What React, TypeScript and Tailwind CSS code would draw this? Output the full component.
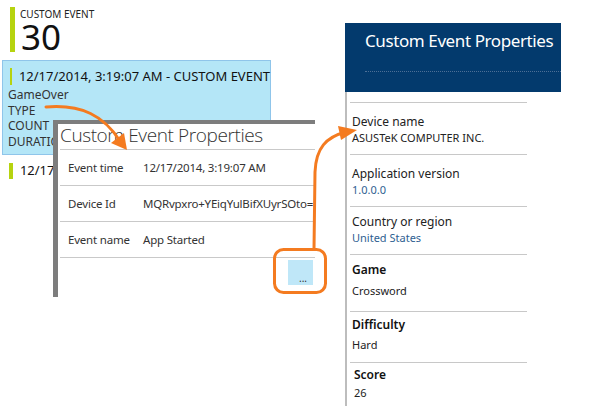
import React from 'react';

const green = 'bg-[#b6d30f]';

const midRows = [
  { label: 'Event time', value: '12/17/2014, 3:19:07 AM' },
  { label: 'Device Id', value: 'MQRvpxro+YEiqYulBifXUyrSOto=' },
  { label: 'Event name', value: 'App Started' },
];

type Prop = { label: string; value: string; h: string; pt: string; gap?: string; bold?: boolean; blue?: boolean; last?: boolean; shift?: boolean };

const rightRows: Prop[] = [
  { label: 'Device name', value: 'ASUSTeK COMPUTER INC.', h: 'h-[52px]', pt: 'pt-[11px]' },
  { label: 'Application version', value: '1.0.0.0', h: 'h-[52px]', pt: 'pt-[11px]', blue: true },
  { label: 'Country or region', value: 'United States', h: 'h-[48px]', pt: 'pt-[7px]', blue: true },
  { label: 'Game', value: 'Crossword', h: 'h-[57px]', pt: 'pt-[7px]', gap: 'mt-[5px]', bold: true },
  { label: 'Difficulty', value: 'Hard', h: 'h-[51px]', pt: 'pt-[5px]', gap: 'mt-[4px]', bold: true },
  { label: 'Score', value: '26', h: 'h-[50px]', pt: 'pt-[4px]', gap: 'mt-[2px]', bold: true, last: true, shift: true },
];

const PropRow: React.FC<{ p: Prop }> = ({ p }) => (
  <div className={`${p.h} ${p.pt} ml-[3px] w-[177px] ${p.last ? '' : 'border-b border-[#c8c8c8]'}`}>
    <div className={`${p.shift ? 'pl-[4px]' : 'pl-[2px]'}`}>
      <div className={`text-[12px] leading-[16px] ${p.bold ? 'font-semibold text-[#111]' : 'text-[#222]'}`}>{p.label}</div>
      <div className={`${p.gap ?? ''} text-[11px] leading-[16px] ${p.blue ? 'text-[#2f5f92]' : 'text-[#222]'}`}>{p.value}</div>
    </div>
  </div>
);

export default function App() {
  return (
    <div className="relative w-[600px] h-[406px] overflow-hidden bg-white font-['Noto_Sans',sans-serif]">
      {/* base list */}
      <div className="w-[271px] pt-[7px]">
        <div className="flex pl-[10px] h-[45px]">
          <div className={`w-[5px] ${green}`}></div>
          <div className="pl-[5px]">
            <div className="text-[10px] leading-[12px] text-[#222] pt-[1px]">CUSTOM EVENT</div>
            <div className="text-[35px] leading-[31px] text-[#111] pl-[1px] mt-[1px]">30</div>
          </div>
        </div>
        <div className="mt-[8px] ml-[2px] h-[95px] bg-[#b4e6f7] border border-[#8fc5ea] pl-[5px] pt-[7px] text-[12px] leading-[15.5px] text-[#333]">
          <div className="flex items-center h-[17px] pl-[2px] gap-[7px]">
            <span className={`w-[4px] h-[17px] ${green}`}></span>
            <span className="text-[13px] text-[#111] whitespace-nowrap">12/17/2014, 3:19:07 AM - CUSTOM EVENT</span>
          </div>
          <div className="mt-[2px]">GameOver</div>
          <div>TYPE</div>
          <div>COUNT 1</div>
          <div>DURATION</div>
        </div>
        <div className="flex items-center h-[16px] mt-[8px] pl-[9px] gap-[7px] whitespace-nowrap">
          <span className={`w-[4px] h-[16px] ${green}`}></span>
          <span className="text-[13px] text-[#111]">12/17/2014, 3:19:07 AM - CUSTOM EVENT</span>
        </div>
      </div>

      {/* middle popup */}
      <div className="absolute left-[53px] top-[120px] w-[262px] h-[177px] bg-white border-t-4 border-l-[5px] border-[#7d7d7d] overflow-hidden">
        <div className="ml-[2px]">
          <div className="h-[26px] border-b border-[#c9c9c9] font-['Open_Sans',sans-serif] text-[19px] font-light tracking-[-0.4px] leading-[22px] text-[#333] whitespace-nowrap">
            Custom Event Properties
          </div>
          {midRows.map((r) => (
            <div key={r.label} className="flex items-center h-[36px] border-b border-[#c9c9c9] text-[11.5px] tracking-[-0.2px] text-[#333] whitespace-nowrap">
              <span className="w-[83px] pl-[8px] shrink-0">{r.label}</span>
              <span>{r.value}</span>
            </div>
          ))}
          <div className="flex justify-end pr-[2px] pt-[2px]">
            <div className="w-[25px] h-[25px] bg-[#bfe7f8] flex items-end justify-end pr-[6px] pb-[2px] text-[10px] leading-[10px] text-[#333]">...</div>
          </div>
        </div>
      </div>

      {/* right panel */}
      <div className="absolute left-[345px] top-[23px] w-[216px] h-[383px]">
        <div className="h-[69px] bg-[#033a6d] pl-[20px] pt-[6px]">
          <div className="text-[17px] tracking-[-0.4px] leading-[24px] text-white whitespace-nowrap">Custom Event Properties</div>
          <div className="mt-[18px] border-t border-dotted border-[#4d6f96]"></div>
        </div>
        <div className="h-[314px] border-l-2 border-[#bdbdbd] pt-[10px]">
          <div className="ml-[3px] w-[177px] border-b border-[#c8c8c8]"></div>
          {rightRows.map((p) => (
            <PropRow key={p.label} p={p} />
          ))}
        </div>
      </div>

      {/* callout arrows */}
      <svg className="absolute left-0 top-0 pointer-events-none" width="600" height="406" viewBox="0 0 600 406">
        <g stroke="#f47b20" strokeWidth="3" fill="none" strokeLinecap="round">
          <path d="M46 107 C 82 104, 104 116, 120 141" />
          <rect x="274.5" y="249.5" width="51" height="43" rx="9" />
          <path d="M314 249 L 315 172 C 316 148, 326 137, 346 132" />
        </g>
        <g fill="#f47b20">
          <polygon points="127,150 111,143 124,133" />
          <polygon points="357,130 341,140 338,126" />
        </g>
      </svg>
    </div>
  );
}
